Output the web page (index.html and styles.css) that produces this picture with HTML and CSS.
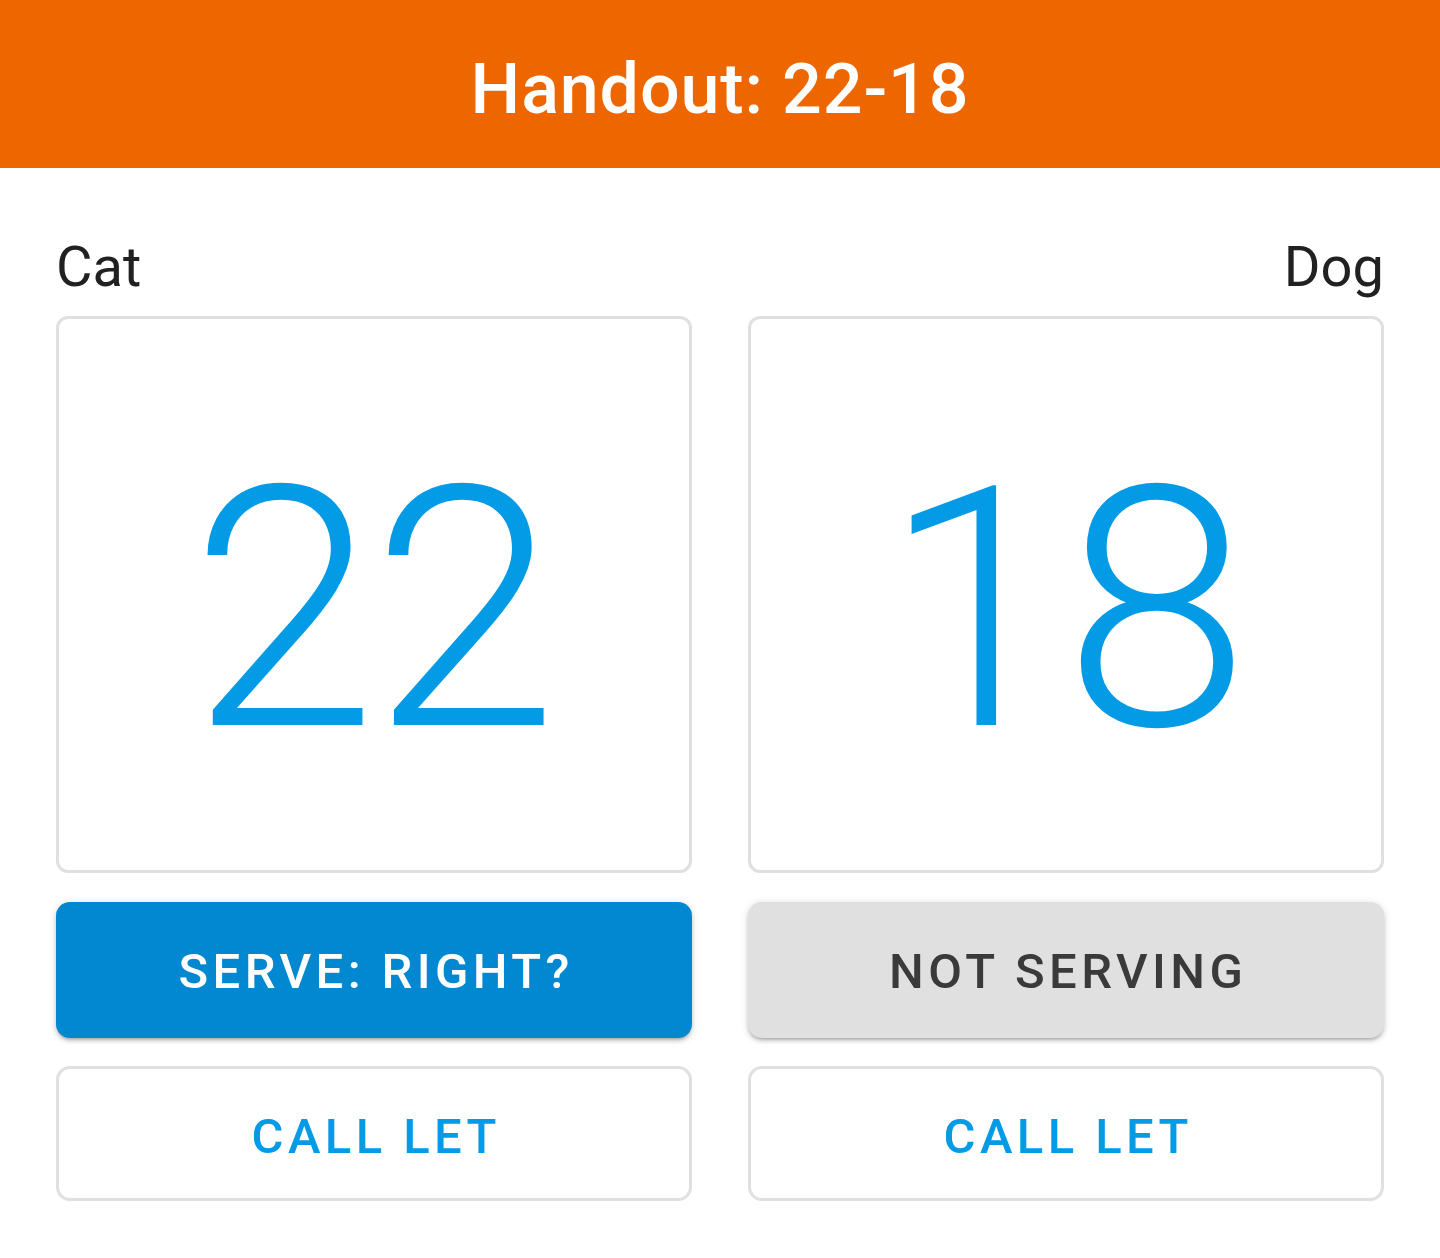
FILE: index.html
```html
<!DOCTYPE html>
<html lang="en">
<head>
<meta charset="utf-8">
<title>Handout: 22-18</title>
<link rel="stylesheet" href="styles.css">
</head>
<body>
<header class="appbar">
  <h1 class="title">Handout: 22-18</h1>
</header>
<main class="board">
  <section class="side">
    <div class="name">Cat</div>
    <div class="card"><span class="score">22</span></div>
    <button class="btn btn-serve">Serve: Right?</button>
    <button class="btn btn-let">Call Let</button>
  </section>
  <section class="side side-right">
    <div class="name">Dog</div>
    <div class="card"><span class="score">18</span></div>
    <button class="btn btn-idle">Not Serving</button>
    <button class="btn btn-let">Call Let</button>
  </section>
</main>
</body>
</html>
```

FILE: styles.css
```css
html, body {
  margin: 0;
  padding: 0;
  background: #ffffff;
  font-family: Roboto, "Noto Sans", "Liberation Sans", sans-serif;
}

.appbar {
  height: 168px;
  box-sizing: border-box;
  padding-top: 10px;
  background: #ee6600;
  display: flex;
  align-items: center;
  justify-content: center;
}

.title {
  margin: 0;
  font-size: 70px;
  font-weight: 500;
  line-height: 1;
  letter-spacing: 0.0125em;
  color: #ffffff;
}

.board {
  display: grid;
  grid-template-columns: 1fr 1fr;
  column-gap: 56px;
  padding: 71px 56px 0;
}

.side {
  display: flex;
  flex-direction: column;
}

.name {
  font-size: 56px;
  line-height: 56px;
  font-weight: 400;
  color: #212121;
  margin-bottom: 21px;
}

.side-right .name {
  text-align: right;
}

.card {
  height: 557px;
  box-sizing: border-box;
  border: 3.5px solid #e0e0e0;
  border-radius: 12px;
  padding-top: 30px;
  display: flex;
  align-items: center;
  justify-content: center;
  color: #039be5;
}

.score {
  font-size: 336px;
  font-weight: 300;
  line-height: 1;
  letter-spacing: -0.0156em;
  margin-right: 0.0156em;
}

.btn {
  display: flex;
  align-items: center;
  justify-content: center;
  box-sizing: border-box;
  height: 136px;
  margin: 29px 0 0;
  padding: 0 0 0 0.09em;
  border: none;
  border-radius: 14px;
  font-family: inherit;
  font-size: 49px;
  font-weight: 500;
  letter-spacing: 0.09em;
  text-transform: uppercase;
  cursor: pointer;
}

.btn-serve {
  background: #0288d1;
  color: #ffffff;
  padding-top: 2px;
  box-shadow: 0 3px 3px -2px rgba(0,0,0,0.2), 0 3px 4px 0 rgba(0,0,0,0.14), 0 1px 8px 0 rgba(0,0,0,0.12);
}

.btn-idle {
  background: #e0e0e0;
  color: #3a3a3a;
  padding-top: 2px;
  box-shadow: 0 3px 3px -2px rgba(0,0,0,0.2), 0 3px 4px 0 rgba(0,0,0,0.14), 0 1px 8px 0 rgba(0,0,0,0.12);
}

.btn-let {
  height: 135px;
  margin-top: 28px;
  padding-top: 5px;
  background: #ffffff;
  border: 3.5px solid #e0e0e0;
  color: #039be5;
}
```
